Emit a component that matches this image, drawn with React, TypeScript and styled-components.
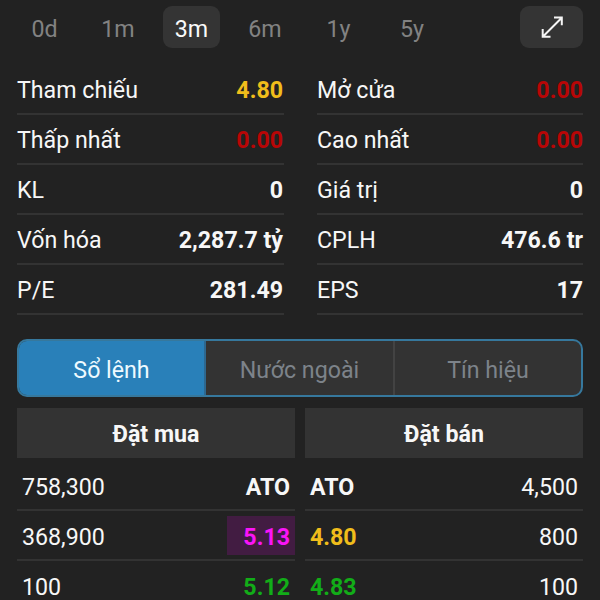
import React from "react";
import styled, { createGlobalStyle } from "styled-components";

const GlobalStyle = createGlobalStyle`
  * { box-sizing: border-box; }
  html, body { margin: 0; background: #222222; overflow: hidden; }
`;

const Screen = styled.main`
  width: 600px;
  height: 600px;
  overflow: hidden;
  padding: 6px 17px 0;
  background: #222222;
  color: #f7f7f7;
  font-family: Roboto, "Noto Sans", sans-serif;
  font-size: 23.2px;
  line-height: 28px;
  white-space: nowrap;
`;

const RangeBar = styled.nav`
  display: flex;
  align-items: center;
  height: 42px;
`;

const RangeButton = styled.button<{ $active?: boolean }>`
  width: 57px;
  height: 42px;
  margin-right: 16.5px;
  padding: 3px 0 0;
  border: 0;
  border-radius: 9px;
  background: ${(p) => (p.$active ? "#343434" : "transparent")};
  color: ${(p) => (p.$active ? "#fafafa" : "#828282")};
  font: inherit;
  &:first-child { margin-left: -1px; }
`;

const ExpandButton = styled.button`
  display: flex;
  align-items: center;
  justify-content: center;
  width: 63px;
  height: 42px;
  margin-left: auto;
  padding: 0;
  border: 0;
  border-radius: 9px;
  background: #343434;
`;

const StatGrid = styled.section`
  display: grid;
  grid-template-columns: 267px 266px;
  column-gap: 33px;
  margin-top: 17px;
`;

const StatRow = styled.div`
  display: flex;
  justify-content: space-between;
  height: 50px;
  padding-top: 11px;
  border-bottom: 2px solid #333333;
  &:nth-child(odd) { padding-right: 1px; }
`;

const Value = styled.strong<{ $color?: string }>`
  color: ${(p) => p.$color ?? "inherit"};
  font-weight: 700;
`;

const Tabs = styled.div`
  display: grid;
  grid-template-columns: 187px 189px 1fr;
  height: 58px;
  margin-top: 24px;
  border: 2px solid #36789d;
  border-radius: 10px;
  background: #333333;
  overflow: hidden;
`;

const Tab = styled.button<{ $active?: boolean }>`
  padding: 3px 0 0;
  border: 0;
  border-right: 2px solid ${(p) => (p.$active ? "#2d6890" : "#434343")};
  background: ${(p) => (p.$active ? "#2980b9" : "transparent")};
  color: ${(p) => (p.$active ? "#eefaff" : "#7d838a")};
  font: inherit;
  &:last-child { border-right: 0; }
`;

const OrderBook = styled.section`
  display: grid;
  grid-template-columns: 278px 278px;
  column-gap: 10px;
  margin-top: 11px;
`;

const BookHeader = styled.h2`
  height: 50px;
  margin: 0 0 3px;
  padding-top: 12px;
  background: #333333;
  font-size: inherit;
  font-weight: 700;
  text-align: center;
`;

const OrderRow = styled.div`
  display: flex;
  align-items: center;
  justify-content: space-between;
  height: 50px;
  border-bottom: 2px solid #333333;
`;

const Volume = styled.span`
  padding: 4px 5px 0;
`;

const Price = styled.strong<{ $color?: string; $lit?: boolean }>`
  height: 39px;
  padding: 7px 5px 0 ${(p) => (p.$lit ? "16px" : "5px")};
  background: ${(p) => (p.$lit ? "#421c42" : "transparent")};
  color: ${(p) => p.$color ?? "inherit"};
  font-weight: 700;
`;

const YELLOW = "#f0bd1b";
const RED = "#b80606";
const GREEN = "#12ad18";
const MAGENTA = "#fa14f8";

const ranges = ["0d", "1m", "3m", "6m", "1y", "5y"];

const stats: { label: string; value: string; color?: string }[] = [
  { label: "Tham chiếu", value: "4.80", color: YELLOW },
  { label: "Mở cửa", value: "0.00", color: RED },
  { label: "Thấp nhất", value: "0.00", color: RED },
  { label: "Cao nhất", value: "0.00", color: RED },
  { label: "KL", value: "0" },
  { label: "Giá trị", value: "0" },
  { label: "Vốn hóa", value: "2,287.7 tỷ" },
  { label: "CPLH", value: "476.6 tr" },
  { label: "P/E", value: "281.49" },
  { label: "EPS", value: "17" },
];

const tabs = ["Sổ lệnh", "Nước ngoài", "Tín hiệu"];

type Order = { volume: string; price: string; color?: string; lit?: boolean };

const bids: Order[] = [
  { volume: "758,300", price: "ATO" },
  { volume: "368,900", price: "5.13", color: MAGENTA, lit: true },
  { volume: "100", price: "5.12", color: GREEN },
];

const asks: Order[] = [
  { volume: "4,500", price: "ATO" },
  { volume: "800", price: "4.80", color: YELLOW },
  { volume: "100", price: "4.83", color: GREEN },
];

const ExpandIcon = () => (
  <svg width="24" height="24" viewBox="0 0 24 24" fill="none" stroke="#f5f5f5" strokeWidth="2">
    <path d="M3 21.5 21.5 3M14 2.5H21.8V10.3M2.7 14V21.8H10.5" />
  </svg>
);

export default function App() {
  return (
    <>
      <GlobalStyle />
      <Screen>
        <RangeBar>
          {ranges.map((r) => (
            <RangeButton key={r} $active={r === "3m"}>{r}</RangeButton>
          ))}
          <ExpandButton aria-label="Expand"><ExpandIcon /></ExpandButton>
        </RangeBar>
        <StatGrid>
          {stats.map((s) => (
            <StatRow key={s.label}>
              <span>{s.label}</span>
              <Value $color={s.color}>{s.value}</Value>
            </StatRow>
          ))}
        </StatGrid>
        <Tabs>
          {tabs.map((t, i) => (
            <Tab key={t} $active={i === 0}>{t}</Tab>
          ))}
        </Tabs>
        <OrderBook>
          <div>
            <BookHeader>Đặt mua</BookHeader>
            {bids.map((o) => (
              <OrderRow key={o.volume}>
                <Volume>{o.volume}</Volume>
                <Price $color={o.color} $lit={o.lit}>{o.price}</Price>
              </OrderRow>
            ))}
          </div>
          <div>
            <BookHeader>Đặt bán</BookHeader>
            {asks.map((o) => (
              <OrderRow key={o.volume}>
                <Price $color={o.color}>{o.price}</Price>
                <Volume>{o.volume}</Volume>
              </OrderRow>
            ))}
          </div>
        </OrderBook>
      </Screen>
    </>
  );
}
